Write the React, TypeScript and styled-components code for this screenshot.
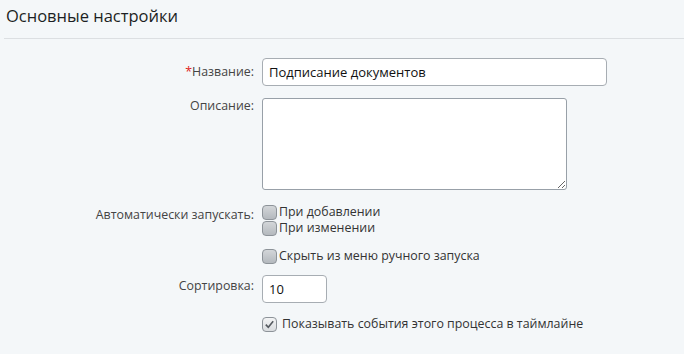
import React from "react";
import styled, {createGlobalStyle} from "styled-components";

const Global = createGlobalStyle`
  html, body {
    margin: 0;
    padding: 0;
    background: #f4f7f9;
  }
  body {
    font-family: "Open Sans", "Noto Sans", sans-serif;
    color: #333;
  }
`;

const Page = styled.div`
  width: 684px;
  height: 354px;
  overflow: hidden;
  background: #f4f7f9;
`;

const Title = styled.h2`
  margin: 0;
  padding: 3px 0 0 6px;
  height: 35px;
  font-size: 16.5px;
  font-weight: 400;
  line-height: 26px;
  color: #1c1f23;
`;

const Divider = styled.hr`
  margin: 0 0 0 4px;
  border: 0;
  border-top: 1px solid #dcdfe2;
`;

const Form = styled.div`
  display: grid;
  grid-template-columns: 254px 1fr;
  column-gap: 8px;
  padding-top: 19px;
`;

const Label = styled.div<{ $top?: number }>`
  text-align: right;
  font-size: 12.4px;
  line-height: 16px;
  color: #444;
  padding-top: ${p => p.$top ?? 0}px;
`;

const Required = styled.span`
  color: #e02424;
`;

const Field = styled.div<{ $gap?: number }>`
  margin-bottom: ${p => p.$gap ?? 0}px;
  display: flex;
  flex-direction: column;
`;

const TextInput = styled.input<{ $width: number }>`
  box-sizing: border-box;
  width: ${p => p.$width}px;
  height: 28px;
  padding: 0 6px;
  border: 1px solid #a7adb3;
  border-radius: 4px;
  background: #fff;
  font: 13px "Open Sans", "Noto Sans", sans-serif;
  color: #111;
  outline: none;
`;

const TextArea = styled.textarea`
  box-sizing: border-box;
  width: 305px;
  height: 92px;
  border: 1px solid #98a0a8;
  border-radius: 3px;
  background: #fff;
  resize: both;
  margin: 0;
  outline: none;
`;

const CheckRow = styled.label`
  display: flex;
  align-items: center;
  gap: 2px;
  font-size: 12.4px;
  line-height: 16px;
  color: #333;
  height: 16px;
`;

const Box = styled.span<{ $checked?: boolean }>`
  box-sizing: border-box;
  width: 15px;
  height: 15px;
  border-radius: 4px;
  border: 1px solid #8d9399;
  background: ${p => p.$checked
    ? "linear-gradient(#f3f4f5, #d9dcdf)"
    : "linear-gradient(#d3d6d9, #b4b9be)"};
  display: flex;
  align-items: center;
  justify-content: center;
  margin-right: ${p => p.$checked ? 3 : 0}px;
`;

function Check({checked, children}: { checked?: boolean; children: React.ReactNode }) {
  return (
    <CheckRow>
      <Box $checked={checked}>
        {checked && (
          <svg width="11" height="11" viewBox="0 0 11 11">
            <path d="M1.8 5.6 L4.3 8.3 L9.2 2.2" fill="none" stroke="#555a60" strokeWidth="1.6"/>
          </svg>
        )}
      </Box>
      {children}
    </CheckRow>
  );
}

export default function App() {
  return (
    <Page>
      <Global/>
      <Title>Основные настройки</Title>
      <Divider/>
      <Form>
        <Label $top={6}><Required>*</Required>Название:</Label>
        <Field $gap={12}>
          <TextInput $width={345} defaultValue="Подписание документов"/>
        </Field>

        <Label $top={0}>Описание:</Label>
        <Field $gap={14}>
          <TextArea/>
        </Field>

        <Label $top={3}>Автоматически запускать:</Label>
        <Field $gap={12}>
          <Check>При добавлении</Check>
          <Check>При изменении</Check>
        </Field>

        <Label/>
        <Field $gap={11}>
          <Check>Скрыть из меню ручного запуска</Check>
        </Field>

        <Label $top={3}>Сортировка:</Label>
        <Field $gap={13}>
          <TextInput $width={65} defaultValue="10"/>
        </Field>

        <Label/>
        <Field>
          <Check checked>Показывать события этого процесса в таймлайне</Check>
        </Field>
      </Form>
    </Page>
  );
}
